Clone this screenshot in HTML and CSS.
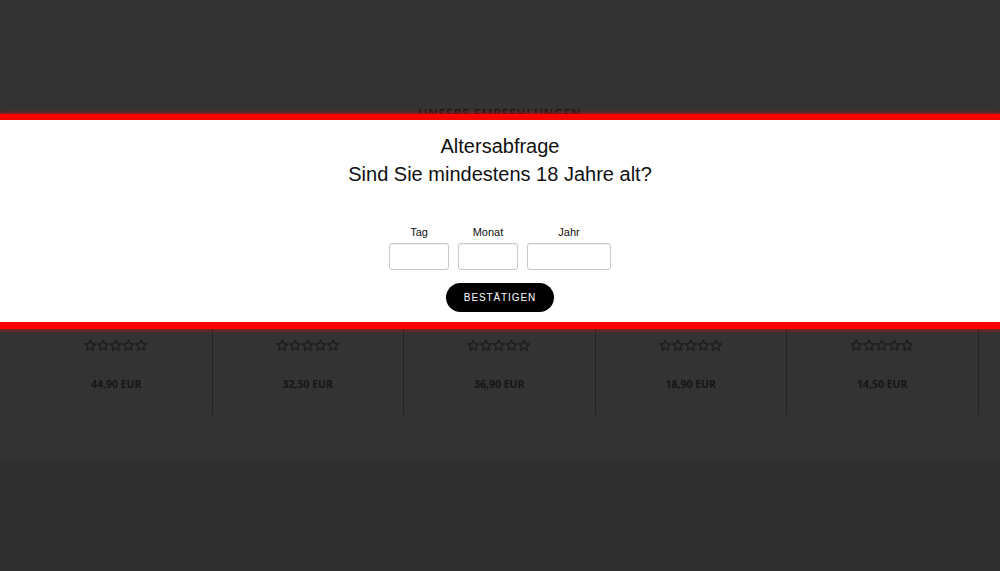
FILE: index.html
```html
<!DOCTYPE html>
<html lang="de">
<head>
<meta charset="utf-8">
<title>Altersabfrage</title>
<link rel="stylesheet" href="styles.css">
</head>
<body>
<div class="page">
  <div class="header-space"></div>
  <h2 class="section-title">UNSERE EMPFEHLUNGEN</h2>
  <div class="products">
    <div class="product">
      <div class="stars"><svg viewBox="0 0 64 13" width="64" height="13"><g fill="none" stroke="#1a1a1a" stroke-width="1.1" stroke-linejoin="round"><path id="s" d="M6.3 1 L7.9 4.6 L11.7 4.9 L8.8 7.4 L9.7 11.2 L6.3 9.2 L2.9 11.2 L3.8 7.4 L0.9 4.9 L4.7 4.6 Z"/><use href="#s" x="12.7"/><use href="#s" x="25.4"/><use href="#s" x="38.1"/><use href="#s" x="50.8"/></g></svg></div>
      <div class="price">44,90 EUR</div>
    </div>
    <div class="product">
      <div class="stars"><svg viewBox="0 0 64 13" width="64" height="13"><g fill="none" stroke="#1a1a1a" stroke-width="1.1" stroke-linejoin="round"><use href="#s"/><use href="#s" x="12.7"/><use href="#s" x="25.4"/><use href="#s" x="38.1"/><use href="#s" x="50.8"/></g></svg></div>
      <div class="price">32,50 EUR</div>
    </div>
    <div class="product">
      <div class="stars"><svg viewBox="0 0 64 13" width="64" height="13"><g fill="none" stroke="#1a1a1a" stroke-width="1.1" stroke-linejoin="round"><use href="#s"/><use href="#s" x="12.7"/><use href="#s" x="25.4"/><use href="#s" x="38.1"/><use href="#s" x="50.8"/></g></svg></div>
      <div class="price">36,90 EUR</div>
    </div>
    <div class="product">
      <div class="stars"><svg viewBox="0 0 64 13" width="64" height="13"><g fill="none" stroke="#1a1a1a" stroke-width="1.1" stroke-linejoin="round"><use href="#s"/><use href="#s" x="12.7"/><use href="#s" x="25.4"/><use href="#s" x="38.1"/><use href="#s" x="50.8"/></g></svg></div>
      <div class="price">18,90 EUR</div>
    </div>
    <div class="product">
      <div class="stars"><svg viewBox="0 0 64 13" width="64" height="13"><g fill="none" stroke="#1a1a1a" stroke-width="1.1" stroke-linejoin="round"><use href="#s"/><use href="#s" x="12.7"/><use href="#s" x="25.4"/><use href="#s" x="38.1"/><use href="#s" x="50.8"/></g></svg></div>
      <div class="price">14,50 EUR</div>
    </div>
    <div class="product partial"></div>
  </div>
  <div class="footer-blocks">
    <div class="fblock"></div>
    <div class="fblock"></div>
    <div class="fblock"></div>
  </div>
</div>

<div class="modal">
  <div class="modal-inner">
    <div class="modal-title">Altersabfrage</div>
    <div class="modal-question">Sind Sie mindestens 18 Jahre alt?</div>
    <form class="date-form">
      <div class="fields">
        <label class="field">
          <span class="field-label">Tag</span>
          <input class="field-input small" type="text">
        </label>
        <label class="field">
          <span class="field-label">Monat</span>
          <input class="field-input small" type="text">
        </label>
        <label class="field">
          <span class="field-label">Jahr</span>
          <input class="field-input large" type="text">
        </label>
      </div>
      <button class="confirm" type="button">BESTÄTIGEN</button>
    </form>
  </div>
</div>
</body>
</html>
```

FILE: styles.css
```css
html, body {
  margin: 0;
  padding: 0;
}
body {
  background: #333333;
  width: 1000px;
  height: 571px;
  overflow: hidden;
  position: relative;
  font-family: "Liberation Sans", Arial, sans-serif;
}
.page {
  display: flex;
  flex-direction: column;
}
.header-space {
  height: 107px;
}
.section-title {
  margin: 0;
  height: 14px;
  line-height: 14px;
  text-align: center;
  font-family: "Open Sans", sans-serif;
  font-size: 12px;
  font-weight: 600;
  letter-spacing: 0.9px;
  color: #161616;
}
.products {
  margin-top: 207px;
  padding-left: 21px;
  display: flex;
  height: 87px;
}
.product {
  width: 190.5px;
  flex: none;
  border-right: 1px solid #222222;
  display: flex;
  flex-direction: column;
  align-items: center;
}
.product.partial {
  width: 20px;
  border-right: none;
}
.stars {
  margin-top: 11px;
  height: 13px;
  line-height: 0;
}
.price {
  margin-top: 25px;
  font-family: "Open Sans", sans-serif;
  font-weight: 700;
  font-size: 10.5px;
  line-height: 14px;
  color: #151515;
}
.footer-blocks {
  margin-top: 45px;
  display: flex;
  height: 111px;
  background: #2f2f2f;
}
.fblock {
  flex: 1;
}
.modal {
  position: absolute;
  top: 114px;
  left: 0;
  right: 0;
  background: #ffffff;
  border-top: 6px solid #ff0000;
  border-bottom: 7px solid #ff0000;
  box-shadow: 0 0 4px 1px rgba(255, 0, 0, 0.6);
}
.modal-inner {
  padding: 12px 0 10px;
  display: flex;
  flex-direction: column;
  align-items: center;
  color: #111111;
}
.modal-title,
.modal-question {
  font-size: 20px;
  line-height: 28px;
}
.date-form {
  margin-top: 38px;
  display: flex;
  flex-direction: column;
  align-items: center;
}
.fields {
  display: flex;
  gap: 9px;
}
.field {
  display: flex;
  flex-direction: column;
  align-items: center;
  gap: 4px;
}
.field-label {
  font-size: 11px;
  line-height: 13px;
  color: #111111;
}
.field-input {
  box-sizing: border-box;
  height: 27px;
  margin: 0;
  border: 1px solid #c8c8c8;
  border-radius: 3px;
  background: #ffffff;
  box-shadow: inset 0 1px 1px rgba(0,0,0,0.05);
}
.field-input.small {
  width: 60px;
}
.field-input.large {
  width: 84px;
}
.confirm {
  margin-top: 13px;
  width: 108px;
  height: 29px;
  border: none;
  border-radius: 15px;
  background: #000000;
  color: #ffffff;
  font-family: "Liberation Sans", Arial, sans-serif;
  font-size: 10px;
  letter-spacing: 0.9px;
  padding: 0;
  cursor: pointer;
}
```
